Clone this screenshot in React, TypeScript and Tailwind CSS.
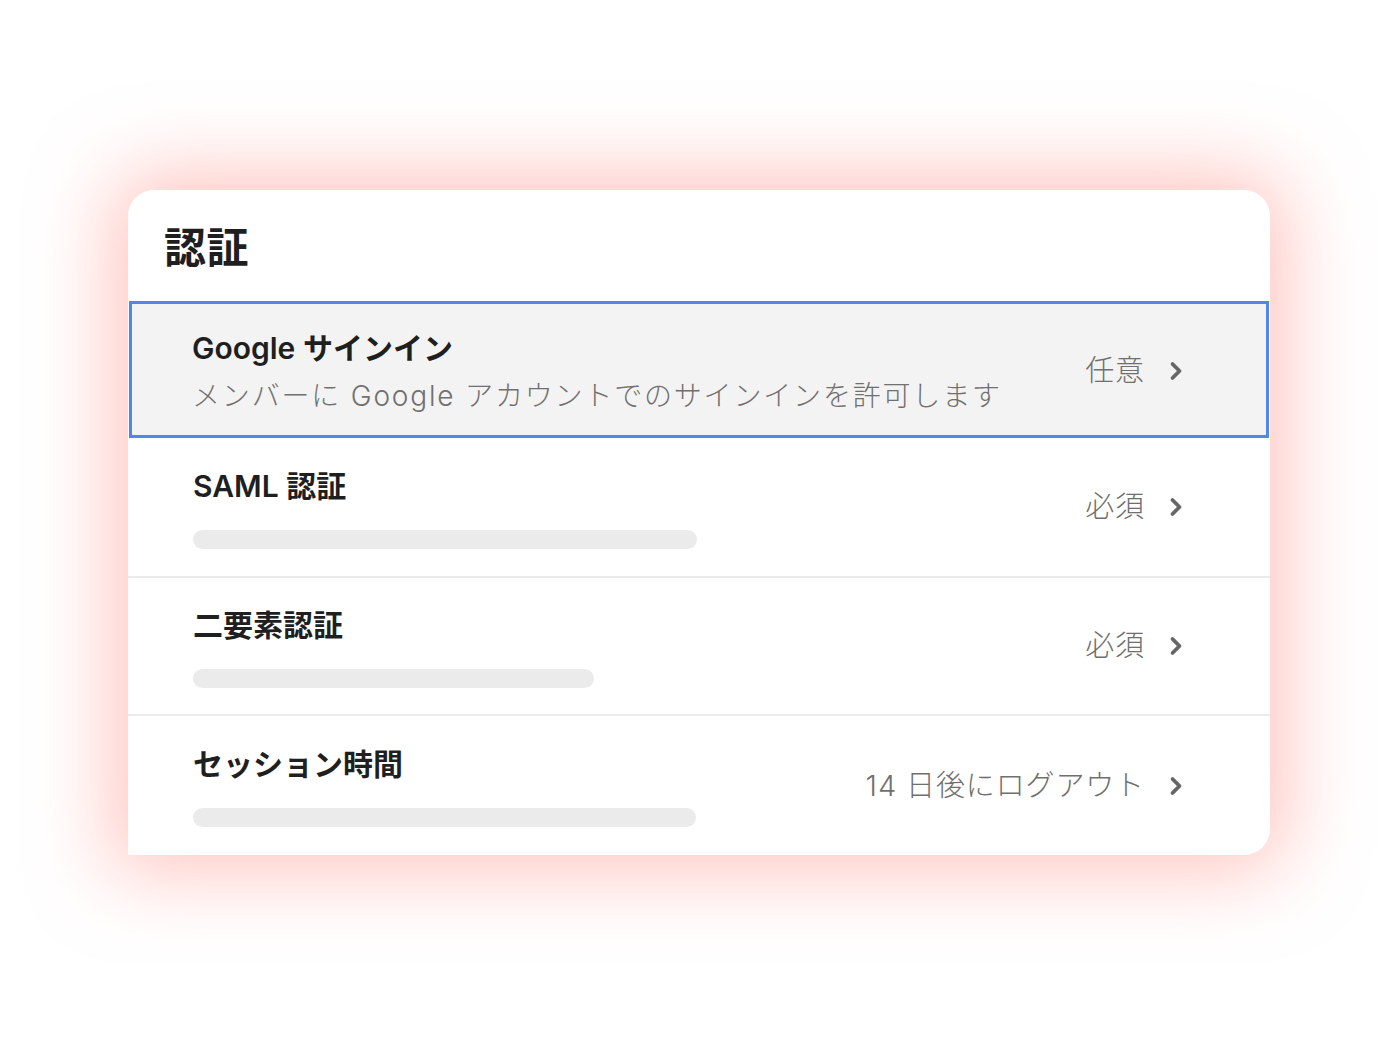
import { ChevronRight } from "lucide-react"

const font = { fontFamily: 'Inter, "Noto Sans CJK JP", sans-serif' }

interface Row {
  title: string
  value: string
  bar: string
  h: string
}

const rows: Row[] = [
  { title: "SAML 認証", value: "必須", bar: "w-[504px]", h: "h-[140px]" },
  { title: "二要素認証", value: "必須", bar: "w-[401px]", h: "h-[138px]" },
  { title: "セッション時間", value: "14 日後にログアウト", bar: "w-[503px]", h: "h-[139px]" },
]

function Value({ text, pr }: { text: string; pr: string }) {
  return (
    <div className={`flex items-center gap-[17px] ${pr}`}>
      <span className="text-[29px] font-light tracking-[0.03em] text-[#6f6f6f]">{text}</span>
      <ChevronRight className="h-[28px] w-[28px] text-[#666]" strokeWidth={3.2} />
    </div>
  )
}

export default function App() {
  return (
    <div className="min-h-[1048px] w-[1400px] bg-white pl-[128px] pt-[190px]" style={font}>
      <div className="w-[1142px] overflow-hidden rounded-tl-[26px] rounded-tr-[26px] rounded-br-[26px] bg-white shadow-[0_0_80px_16px_rgba(255,140,130,0.5)]">
        <div className="flex h-[111px] items-center pl-[36px] pt-[4px]">
          <h1 className="text-[42px] font-bold tracking-[0.01em] text-[#1f1f1f]">認証</h1>
        </div>

        {/* selected row */}
        <div className="mx-[1px] flex h-[137px] items-center justify-between border-[3px] border-[#4f88ea] bg-[#f4f3f3]">
          <div className="flex flex-col pl-[60px] pt-[4px]">
            <span className="text-[30px] font-semibold leading-[40px] text-[#1f1f1f]">Google サインイン</span>
            <span className="mt-[8px] text-[28px] font-light leading-[40px] tracking-[0.065em] text-[#707070]">
              メンバーに Google アカウントでのサインインを許可します
            </span>
          </div>
          <div className="pt-[2px]">
            <Value text="任意" pr="pr-[76px]" />
          </div>
        </div>

        {rows.map((r, i) => (
          <div
            key={r.title}
            className={`flex items-center justify-between ${r.h} ${i < rows.length - 1 ? "border-b-2 border-[#ebebeb]" : ""}`}
          >
            <div className="flex flex-col pl-[65px]">
              <span className="text-[30px] font-semibold leading-[40px] text-[#1f1f1f]">{r.title}</span>
              <div className={`mt-[24px] h-[19px] rounded-full bg-[#ebebeb] ${r.bar}`} />
            </div>
            <Value text={r.value} pr="pr-[80px]" />
          </div>
        ))}
      </div>
    </div>
  )
}
